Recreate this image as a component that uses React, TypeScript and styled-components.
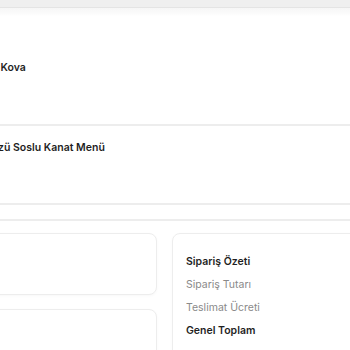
import styled, { createGlobalStyle } from 'styled-components';

const colors = {
  text: '#1f1f1f',
  muted: '#8a8a8a',
  border: '#ededed',
  header: '#efefef',
  surface: '#ffffff',
};

const GlobalStyle = createGlobalStyle`
  html, body {
    margin: 0;
    padding: 0;
    background: ${colors.surface};
    overflow: hidden;
  }
  body {
    font-family: Inter, "Noto Sans", sans-serif;
    color: ${colors.text};
  }
`;

const Page = styled.div`
  width: 350px;
  height: 350px;
  overflow: hidden;
  display: flex;
  flex-direction: column;
`;

const TopBar = styled.div`
  height: 7px;
  flex-shrink: 0;
  background: ${colors.header};
  border-bottom: 1px solid #e4e4e4;
`;

// soft band under the top bar
const TopFade = styled.div`
  height: 8px;
  flex-shrink: 0;
  background: linear-gradient(#f6f6f6, #fbfbfb 70%, #ffffff);
`;

const CartList = styled.div`
  display: flex;
  flex-direction: column;
  margin-left: -34px;
`;

const CartRow = styled.div<{ $height: number; $top: number }>`
  height: ${(p) => p.$height}px;
  padding-top: ${(p) => p.$top}px;
  box-sizing: border-box;
  border-bottom: 2px solid ${colors.border};
`;

const ItemName = styled.div`
  font-size: 10.5px;
  line-height: 15px;
  font-weight: 600;
  white-space: nowrap;
`;

const Summary = styled.div`
  margin-top: 14px;
  border-top: 2px solid ${colors.border};
  padding-top: 12px;
  margin-left: -30px;
  display: grid;
  grid-template-columns: 187px 220px;
  column-gap: 15px;
  align-items: start;
`;

const LeftStack = styled.div`
  display: flex;
  flex-direction: column;
  gap: 14px;
`;

const Card = styled.div<{ $height: number }>`
  height: ${(p) => p.$height}px;
  border: 1px solid ${colors.border};
  border-radius: 8px;
  box-shadow: 0 1px 3px rgba(0, 0, 0, 0.03);
  background: ${colors.surface};
`;

const SummaryCard = styled.div`
  height: 200px;
  border: 1px solid ${colors.border};
  border-radius: 8px;
  box-shadow: 0 1px 3px rgba(0, 0, 0, 0.03);
  padding: 20px 13px;
  display: flex;
  flex-direction: column;
  gap: 8px;
`;

const Line = styled.div<{ $strong?: boolean }>`
  font-size: 10.5px;
  line-height: 15px;
  font-weight: ${(p) => (p.$strong ? 600 : 400)};
  color: ${(p) => (p.$strong ? colors.text : colors.muted)};
  white-space: nowrap;
`;

export default function App() {
  return (
    <Page>
      <GlobalStyle />
      <TopBar />
      <TopFade />
      <CartList>
        <CartRow $height={110} $top={44}>
          <ItemName>Büyük Kova</ItemName>
        </CartRow>
        <CartRow $height={79} $top={14}>
          <ItemName>Acı Sözü Soslu Kanat Menü</ItemName>
        </CartRow>
      </CartList>
      <Summary>
        <LeftStack>
          <Card $height={60} />
          <Card $height={80} />
        </LeftStack>
        <SummaryCard>
          <Line $strong>Sipariş Özeti</Line>
          <Line>Sipariş Tutarı</Line>
          <Line>Teslimat Ücreti</Line>
          <Line $strong>Genel Toplam</Line>
        </SummaryCard>
      </Summary>
    </Page>
  );
}
